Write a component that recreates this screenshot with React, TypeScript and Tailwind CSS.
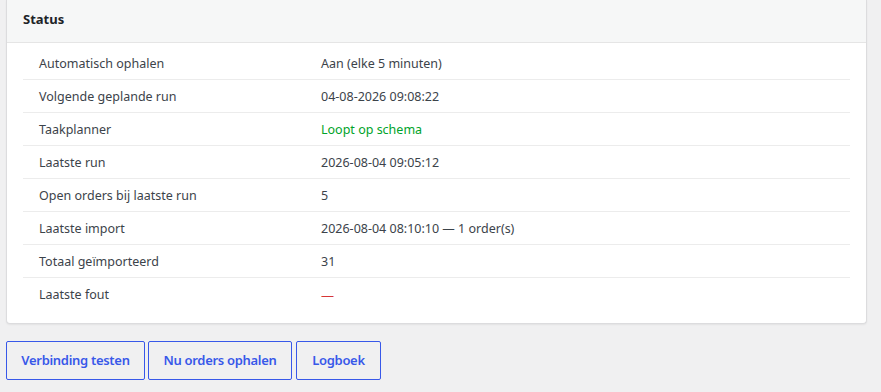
const rows: { label: string; value: string; cls: string }[] = [
  { label: 'Automatisch ophalen', value: 'Aan (elke 5 minuten)', cls: '' },
  { label: 'Volgende geplande run', value: '04-08-2026 09:08:22', cls: '' },
  { label: 'Taakplanner', value: 'Loopt op schema', cls: 'text-[#00a32a]' },
  { label: 'Laatste run', value: '2026-08-04 09:05:12', cls: '' },
  { label: 'Open orders bij laatste run', value: '5', cls: '' },
  { label: 'Laatste import', value: '2026-08-04 08:10:10 — 1 order(s)', cls: '' },
  { label: 'Totaal geïmporteerd', value: '31', cls: '' },
  { label: 'Laatste fout', value: '—', cls: 'text-[#d63638] text-[13px]' },
];

export default function App() {
  return (
    <div
      className="min-h-screen bg-[#f0f0f1] pl-[6px] pr-[14px] text-[12.5px] text-[#3c434a]"
      style={{ fontFamily: '"Noto Sans", "Open Sans", Arial, sans-serif' }}
    >
      {/* Status card */}
      <div className="bg-white border border-[#dcdcde] border-t-0 rounded-b-[4px] shadow-[0_1px_2px_rgba(0,0,0,0.06)]">
        <div className="h-[43px] bg-[#f6f7f7] border-b border-[#e5e5e5] px-[16px] flex items-center">
          <h2 className="text-[13px] font-bold text-[#1d2327] -mt-[3px]">Status</h2>
        </div>
        <div className="px-[16px] pt-[4px] pb-[12px]">
          {rows.map((r, i) => (
            <div
              key={r.label}
              className={`flex h-[33px] pt-[2px] items-center ${i < rows.length - 1 ? 'border-b border-[#ececec]' : ''}`}
            >
              <div className="w-[298px] pl-[16px]">{r.label}</div>
              <div className={r.cls}>{r.value}</div>
            </div>
          ))}
        </div>
      </div>

      {/* Actions */}
      <div className="flex gap-[3px] mt-[17px]">
        <button className="w-[139px] h-[39px] border-[#3858e9] border rounded-[2px] text-[#3858e9] font-semibold text-[13px] tracking-[-0.3px] whitespace-nowrap">
          Verbinding testen
        </button>
        <button className="w-[144px] h-[39px] border-[#3858e9] border rounded-[2px] text-[#3858e9] font-semibold text-[13px] tracking-[-0.3px] whitespace-nowrap">
          Nu orders ophalen
        </button>
        <button className="ml-[1px] w-[85px] h-[39px] border-[#3858e9] border rounded-[2px] text-[#3858e9] font-semibold text-[13px] tracking-[-0.3px] whitespace-nowrap">
          Logboek
        </button>
      </div>
    </div>
  );
}
